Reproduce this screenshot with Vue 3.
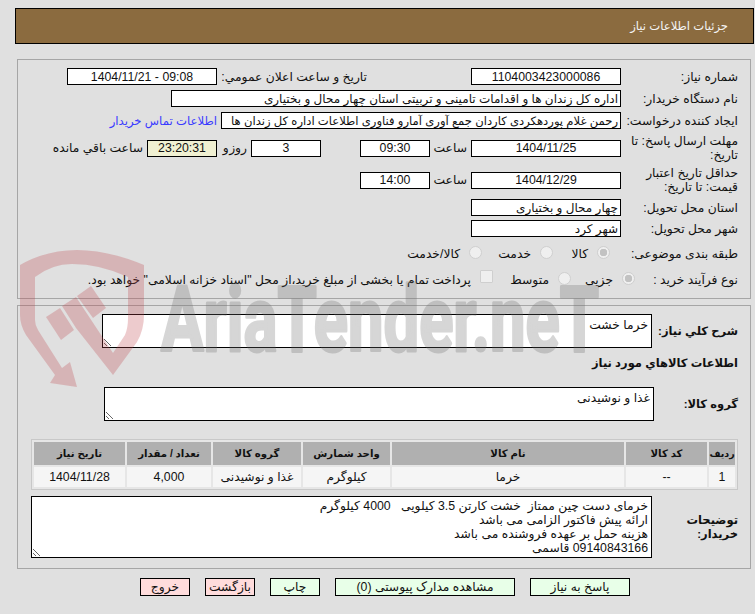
<template>
  <div class="page" dir="rtl">
    <div class="content">
      <div class="title-bar">جزئیات اطلاعات نیاز</div>

      <div class="panel panel-top">
        <div class="row row-1">
          <label class="lbl">شماره نیاز:</label>
          <input class="box w150" readonly value="1104003423000086" />
          <label class="lbl-announce">تاریخ و ساعت اعلان عمومي:</label>
          <input class="box w150" readonly value="09:08 - 1404/11/21" />
        </div>
        <div class="row row-1">
          <label class="lbl">نام دستگاه خریدار:</label>
          <input class="box start w450" readonly value="اداره کل زندان ها و اقدامات تامینی و تربیتی استان چهار محال و بختیاری" />
        </div>
        <div class="row row-3">
          <label class="lbl">ایجاد کننده درخواست:</label>
          <input class="box start w400" readonly value="رحمن غلام پوردهکردی کاردان جمع آوری آمارو فناوری اطلاعات اداره کل زندان ها" />
          <a class="contact">اطلاعات تماس خریدار</a>
        </div>
        <div class="row row-4">
          <label class="lbl">مهلت ارسال پاسخ: تا تاریخ:</label>
          <input class="box w150" readonly value="1404/11/25" />
          <span class="unit u-hour">ساعت</span>
          <input class="box w70" readonly value="09:30" />
          <input class="box w70 days" readonly value="3" />
          <span class="unit u-day">روز و</span>
          <input class="box w70 clock" readonly value="23:20:31" />
          <span class="remain">ساعت باقي مانده</span>
        </div>
        <div class="row row-5">
          <label class="lbl">حداقل تاریخ اعتبار قیمت: تا تاریخ:</label>
          <input class="box w150" readonly value="1404/12/29" />
          <span class="unit u-hour">ساعت</span>
          <input class="box w70" readonly value="14:00" />
        </div>
        <div class="row row-6">
          <label class="lbl">استان محل تحویل:</label>
          <input class="box start w150" readonly value="چهار محال و بختیاری" />
        </div>
        <div class="row row-7">
          <label class="lbl">شهر محل تحویل:</label>
          <input class="box start w150" readonly value="شهر کرد" />
        </div>
        <div class="row row-8">
          <label class="lbl-type">طبقه بندی موضوعی:</label>
          <span class="choice c57"><i class="radio checked"></i>کالا</span>
          <span class="choice c71"><i class="radio"></i>خدمت</span>
          <span class="choice"><i class="radio"></i>کالا/خدمت</span>
        </div>
        <div class="row row-9">
          <label class="lbl-process">نوع فرآیند خرید :</label>
          <span class="choice c64"><i class="radio checked"></i>جزیی</span>
          <span class="choice c78"><i class="radio"></i>متوسط</span>
          <span class="choice"><i class="check"></i>پرداخت تمام یا بخشی از مبلغ خرید،از محل "اسناد خزانه اسلامی" خواهد بود.</span>
        </div>
      </div>

      <div class="panel panel-bottom">
        <div class="row need-row">
          <label class="lbl-wide bold">شرح کلي نیاز:</label>
          <textarea class="area need" readonly>خرما خشت</textarea>
        </div>
        <div class="goods-title bold">اطلاعات کالاهاي مورد نیاز</div>
        <div class="row group-row">
          <label class="lbl-group bold">گروه کالا:</label>
          <textarea class="area group" readonly>غذا و نوشیدنی</textarea>
        </div>

        <table class="items">
          <colgroup>
            <col v-for="w in colWidths" :key="w" :style="{ width: w + 'px' }" />
          </colgroup>
          <thead>
            <tr>
              <th v-for="h in headers" :key="h">{{ h }}</th>
            </tr>
          </thead>
          <tbody>
            <tr>
              <td v-for="c in cells" :key="c">{{ c }}</td>
            </tr>
          </tbody>
        </table>

        <div class="row desc-row">
          <label class="lbl-wide lbl-wrap bold">توضیحات خریدار:</label>
          <textarea class="area desc" readonly :value="description"></textarea>
        </div>
      </div>

      <div class="actions">
        <button class="btn green w100">پاسخ به نیاز</button>
        <button class="btn green w180">مشاهده مدارک پیوستی (0)</button>
        <button class="btn green">چاپ</button>
        <button class="btn red">بازگشت</button>
        <button class="btn red">خروج</button>
      </div>
    </div>

    <!-- watermark sits over the form, it is see-through so the text stays readable -->
    <svg class="watermark" viewBox="0 0 755 614" aria-hidden="true">
      <path class="shield" d="M20 265 Q72 235 144 265 L144 315 Q144 330 137 342 L113 375 L76 328 L62 306 L76 297 L113 353 L125 335 Q128 328 128 318 L128 277 Q100 264 72 264 Q52 264 35 277 L35 320 Q35 325 38 330 L62 368 L70 362 L77 387 L50 383 L55 375 L26 335 Q20 325 20 315 Z" />
      <path class="shield" d="M46 317 L60 308 L74 330 L61 340 Z" />
      <path class="shield" d="M77 296 L91 286 L106 308 L93 318 Z" />
      <text class="wm-text" x="161" y="351" textLength="438" lengthAdjust="spacingAndGlyphs">AriaTender.neT</text>
    </svg>
  </div>
</template>

<script setup>
const colWidths = [26, 81, 232, 87, 88, 84, 91];
const headers = ["ردیف", "کد کالا", "نام کالا", "واحد شمارش", "گروه کالا", "تعداد / مقدار", "تاریخ نیاز"];
const cells = ["1", "--", "خرما", "کیلوگرم", "غذا و نوشیدنی", "4,000", "1404/11/28"];
const description = [
  "خرمای دست چین ممتاز  خشت کارتن 3.5 کیلویی   4000 کیلوگرم",
  "ارائه پیش فاکتور الزامی می باشد",
  "هزینه حمل بر عهده فروشنده می باشد",
  "09140843166 قاسمی",
].join("\n");
</script>

<style>
html,
body {
  margin: 0;
  background: #e0e0e0;
}
</style>

<style scoped>
.page {
  position: relative;
  width: 755px;
  height: 614px;
  overflow: hidden;
  background: #e0e0e0;
  color: #111;
  font-family: "Liberation Sans", "DejaVu Sans", sans-serif;
  font-size: 12.3px;
}
.watermark {
  position: absolute;
  top: 0;
  left: 0;
  width: 755px;
  height: 614px;
  pointer-events: none;
}
.shield {
  fill: rgba(190, 70, 75, 0.28);
}
.wm-text {
  font-family: Roboto, sans-serif;
  font-weight: 700;
  font-size: 90px;
  fill: #6e6e6e;
  stroke: #6e6e6e;
  stroke-width: 3px;
  stroke-linejoin: round;
  opacity: 0.28;
  direction: ltr;
}
.content {
  padding-top: 8px;
}
.title-bar {
  height: 36px;
  box-sizing: border-box;
  margin: 0 1px 0 15px;
  padding-right: 25px;
  border: 1px solid #000;
  background: #8b6b3f;
  color: #f4f4f4;
  font-size: 11.6px;
  line-height: 34px;
}
.panel {
  box-sizing: border-box;
  margin: 0 4px 0 17px;
  padding: 8px 12px 0 0;
  border: 1px solid #a6a6a6;
}
.panel-top {
  height: 240px;
  margin-top: 15px;
}
.panel-bottom {
  height: 264px;
  margin-top: 6px;
}
.row {
  display: flex;
  align-items: center;
}
.row-1 {
  height: 17px;
  margin-bottom: 5px;
}
.row-3 {
  height: 17px;
  margin-bottom: 5px;
}
.row-4 {
  height: 28px;
  margin-bottom: 3px;
}
.row-5 {
  height: 30px;
  margin-bottom: 4px;
}
.row-6 {
  height: 17px;
  margin-bottom: 4px;
}
.row-7 {
  height: 17px;
  margin-bottom: 8px;
}
.row-8 {
  height: 17px;
  margin-bottom: 9px;
}
.row-9 {
  height: 17px;
}
.lbl {
  width: 117px;
  flex: none;
  line-height: 14px;
}
.bold {
  font-weight: 700;
  font-size: 11.5px;
}
.lbl-announce {
  width: 150px;
  margin-right: 104px;
  flex: none;
}
.lbl-type {
  width: 128px;
  flex: none;
}
.lbl-process {
  width: 103px;
  flex: none;
}
.lbl-wide {
  width: 86px;
  flex: none;
  line-height: 14px;
}
.lbl-wrap {
  padding-left: 24px;
  box-sizing: border-box;
}
.lbl-group {
  width: 84px;
  flex: none;
}
.box {
  height: 17px;
  box-sizing: border-box;
  flex: none;
  padding: 0 2px;
  border: 1px solid #000;
  border-radius: 0;
  outline: none;
  background: #fff;
  color: #111;
  font: inherit;
  text-align: center;
}
.start {
  font-size: 12px;
  text-align: right;
}
.w150 {
  width: 150px;
}
.w450 {
  width: 450px;
}
.w400 {
  width: 400px;
  font-size: 11.6px;
}
.w70 {
  width: 70px;
}
.days {
  margin-right: 39px;
}
.clock {
  background: #f0f0d2;
}
.contact {
  margin-right: 4px;
  color: #3a3aff;
  font-size: 11.7px;
}
.unit {
  flex: none;
}
.u-hour {
  width: 41px;
  padding-right: 4px;
  box-sizing: border-box;
}
.u-day {
  width: 34px;
  padding-right: 4px;
  box-sizing: border-box;
  word-spacing: -3px;
}
.remain {
  margin-right: 4px;
}
.choice {
  display: inline-flex;
  align-items: center;
  gap: 9px;
  flex: none;
}
.c57 {
  width: 57px;
}
.c71 {
  width: 71px;
}
.c64 {
  width: 64px;
}
.c78 {
  width: 78px;
}
.radio,
.check {
  width: 13px;
  height: 13px;
  box-sizing: border-box;
  flex: none;
  border: 1px solid #cfcfcf;
  background: #efefef;
}
.radio {
  border-radius: 50%;
  margin-top: -2px;
}
.check {
  margin-top: -6px;
  border-radius: 1px;
}
.radio.checked {
  background: radial-gradient(circle, #c2c2c2 0 3.5px, #efefef 4px);
}
.area {
  display: block;
  box-sizing: border-box;
  flex: none;
  padding: 3px 3px 0;
  border: 1px solid #000;
  border-radius: 0;
  outline: none;
  background: #fff;
  color: #111;
  font-family: inherit;
  font-size: 12.3px;
  line-height: 14px;
  overflow: hidden;
}
.need-row {
  height: 34px;
}
.need {
  width: 550px;
  height: 34px;
}
.goods-title {
  margin-top: 8px;
  line-height: 14px;
}
.group-row {
  height: 34px;
  margin-top: 17px;
}
.group {
  width: 550px;
  height: 34px;
}
.items {
  box-sizing: border-box;
  width: 707px;
  height: 51px;
  margin-top: 18px;
  border: 1px solid #c8c8c8;
  border-spacing: 2px;
  border-collapse: separate;
  table-layout: fixed;
  background: #e6e6e6;
}
.items th {
  height: 23px;
  padding: 0;
  background: #b0b0b0;
  font-size: 10.2px;
  font-weight: 700;
  text-align: center;
}
.items th:first-child {
  font-size: 9.5px;
}
.items td {
  height: 20px;
  padding: 0;
  background: #f5f5f5;
  text-align: center;
}
.desc-row {
  height: 62px;
  margin-top: 6px;
}
.desc {
  width: 621px;
  height: 62px;
  padding-top: 2px;
}
.actions {
  display: flex;
  gap: 15px;
  margin-top: 9px;
  padding-right: 125px;
}
.btn {
  width: 50px;
  height: 18px;
  box-sizing: border-box;
  padding: 0;
  border: 1px solid #000;
  border-radius: 0;
  color: #111;
  font: inherit;
}
.w100 {
  width: 100px;
}
.w180 {
  width: 180px;
}
.green {
  background: #e8ffe8;
}
.red {
  background: #ffdcdc;
}
</style>
